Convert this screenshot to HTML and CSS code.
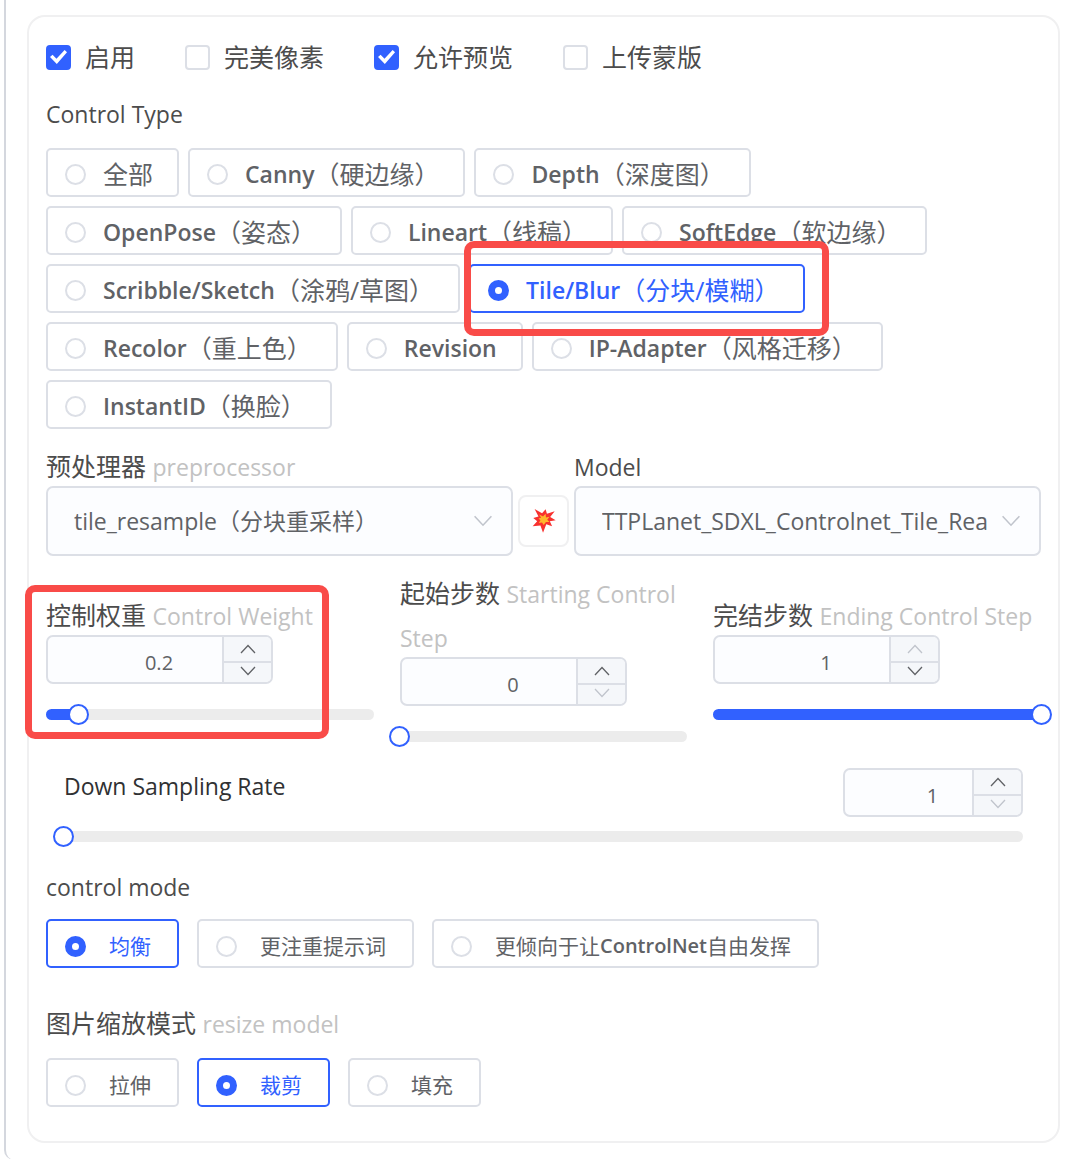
FILE: index.html
```html
<!DOCTYPE html>
<html lang="zh-CN">
<head>
<meta charset="utf-8">
<meta name="viewport" content="width=device-width, initial-scale=1">
<title>ControlNet</title>
<link rel="stylesheet" href="styles.css">
</head>
<body>
<svg class="sprite" aria-hidden="true">
  <symbol id="up" viewBox="0 0 16 10"><path d="M1 9 8 1.5 15 9" fill="none" stroke="currentColor" stroke-width="1.3"/></symbol>
  <symbol id="down" viewBox="0 0 16 10"><path d="M1 1 8 8.5 15 1" fill="none" stroke="currentColor" stroke-width="1.3"/></symbol>
</svg>
<main class="page">
<form class="card">
  <div class="checks">
    <label class="check"><input type="checkbox" checked>启用</label>
    <label class="check"><input type="checkbox">完美像素</label>
    <label class="check"><input type="checkbox" checked>允许预览</label>
    <label class="check"><input type="checkbox">上传蒙版</label>
  </div>

  <fieldset class="group group-type">
    <legend class="title"><span class="latin">Control Type</span></legend>
    <div class="options">
      <label class="option"><input type="radio" name="type">全部</label>
      <label class="option"><input type="radio" name="type"><b>Canny</b>（硬边缘）</label>
      <label class="option"><input type="radio" name="type"><b>Depth</b>（深度图）</label>
      <label class="option"><input type="radio" name="type"><b>OpenPose</b>（姿态）</label>
      <label class="option"><input type="radio" name="type"><b>Lineart</b>（线稿）</label>
      <label class="option"><input type="radio" name="type"><b>SoftEdge</b>（软边缘）</label>
      <label class="option"><input type="radio" name="type"><b>Scribble/Sketch</b>（涂鸦/草图）</label>
      <label class="option marked"><input type="radio" name="type" checked><b>Tile/Blur</b>（分块/模糊）</label>
      <label class="option"><input type="radio" name="type"><b>Recolor</b>（重上色）</label>
      <label class="option"><input type="radio" name="type"><b>Revision</b></label>
      <label class="option"><input type="radio" name="type"><b>IP-Adapter</b>（风格迁移）</label>
      <label class="option"><input type="radio" name="type"><b>InstantID</b>（换脸）</label>
    </div>
  </fieldset>

  <div class="models">
    <div class="field">
      <label class="title" for="pre">预处理器 <span class="latin hint">preprocessor</span></label>
      <div class="select">
        <select id="pre"><option>tile_resample（分块重采样）</option></select>
        <svg class="chevron"><use href="#down"/></svg>
      </div>
    </div>
    <button class="run" type="button" aria-label="预处理">
      <svg viewBox="8 10 74 74">
        <path fill="#f8312f" d="M16 10 39 23 50 11 54 25 78 17 64 35 81 45 63 48 70 63 52 57 42 83 34 61 10 63 24 48 12 38 28 33z"/>
        <path fill="#ffb62e" d="M30 27 42 33 50 25 51 36 62 34 55 43 62 50 51 50 44 59 39 52 29 53 34 45 28 39 36 37z"/>
      </svg>
    </button>
    <div class="field">
      <label class="title" for="model"><span class="latin">Model</span></label>
      <div class="select">
        <select id="model"><option>TTPLanet_SDXL_Controlnet_Tile_Rea</option></select>
        <svg class="chevron"><use href="#down"/></svg>
      </div>
    </div>
  </div>

  <div class="steps">
    <div class="step marked">
      <label class="title" for="weight">控制权重 <span class="latin hint">Control Weight</span></label>
      <div class="number">
        <input id="weight" type="number" value="0.2" min="0" max="2" step="0.1">
        <div class="spin">
          <button type="button" aria-label="增加"><svg><use href="#up"/></svg></button>
          <button type="button" aria-label="减少"><svg><use href="#down"/></svg></button>
        </div>
      </div>
      <div class="slider" style="--value: 10%"><input type="range" aria-label="Control Weight" min="0" max="2" step="0.1" value="0.2"></div>
    </div>
    <div class="step">
      <label class="title" for="start">起始步数 <span class="latin hint">Starting Control Step</span></label>
      <div class="number">
        <input id="start" type="number" value="0" min="0" max="1">
        <div class="spin">
          <button type="button" aria-label="增加"><svg><use href="#up"/></svg></button>
          <button type="button" aria-label="减少" disabled><svg><use href="#down"/></svg></button>
        </div>
      </div>
      <div class="slider" style="--value: 0%"><input type="range" aria-label="Starting Control Step" min="0" max="1" step="0.01" value="0"></div>
    </div>
    <div class="step">
      <label class="title" for="end">完结步数 <span class="latin hint">Ending Control Step</span></label>
      <div class="number">
        <input id="end" type="number" value="1" min="0" max="1">
        <div class="spin">
          <button type="button" aria-label="增加" disabled><svg><use href="#up"/></svg></button>
          <button type="button" aria-label="减少"><svg><use href="#down"/></svg></button>
        </div>
      </div>
      <div class="slider" style="--value: 100%"><input type="range" aria-label="Ending Control Step" min="0" max="1" step="0.01" value="1"></div>
    </div>
  </div>

  <div class="sampling">
    <div class="sampling-head">
      <label for="rate"><span class="latin">Down Sampling Rate</span></label>
      <div class="number narrow">
        <input id="rate" type="number" value="1" min="1" max="4">
        <div class="spin">
          <button type="button" aria-label="增加"><svg><use href="#up"/></svg></button>
          <button type="button" aria-label="减少" disabled><svg><use href="#down"/></svg></button>
        </div>
      </div>
    </div>
    <div class="slider" style="--value: 0%"><input type="range" aria-label="Down Sampling Rate" min="1" max="4" step="0.1" value="1"></div>
  </div>

  <fieldset class="group group-mode">
    <legend class="title"><span class="latin">control mode</span></legend>
    <div class="options small">
      <label class="option"><input type="radio" name="mode" checked>均衡</label>
      <label class="option"><input type="radio" name="mode">更注重提示词</label>
      <label class="option"><input type="radio" name="mode">更倾向于让<b>ControlNet</b>自由发挥</label>
    </div>
  </fieldset>

  <fieldset class="group group-resize">
    <legend class="title">图片缩放模式 <span class="latin hint">resize model</span></legend>
    <div class="options small">
      <label class="option"><input type="radio" name="resize">拉伸</label>
      <label class="option"><input type="radio" name="resize" checked>裁剪</label>
      <label class="option"><input type="radio" name="resize">填充</label>
    </div>
  </fieldset>
</form>
</main>
</body>
</html>
```
FILE: styles.css
```css
:root {
  --blue: #3161ff;
  --line: #dcdfe6;
  --text: #606266;
  --fill: #fcfdff;
  --red: #f94b48;
}

* { box-sizing: border-box; }

body {
  margin: 0;
  background: #fff;
  color: #4c4c4c;
  font-family: "Open Sans", "Noto Sans CJK SC", sans-serif;
  font-size: 25px;
  line-height: 44px;
}

input, select, button { font: inherit; color: inherit; }

.sprite { display: none; }

.page {
  min-height: 100vh;
  margin-left: 4px;
  padding: 15px 20px 17px 21px;
  border-left: 2px solid #d4d7de;
  border-bottom-left-radius: 10px;
}

.card {
  padding: 18px 17px 34px;
  border: 2px solid #f0f0f1;
  border-radius: 18px;
}

.latin {
  font-size: 23px;
  line-height: 1;
}

.hint { color: #c2c2c2; }

.title {
  display: block;
  padding: 0;
}

.checks {
  display: flex;
  flex-wrap: wrap;
  gap: 0 50px;
}

.check {
  display: flex;
  align-items: center;
  gap: 14px;
}

.check input {
  appearance: none;
  width: 25px;
  height: 25px;
  margin: 0;
  border: 2px solid var(--line);
  border-radius: 4px;
  background: #fff;
  display: grid;
  place-items: center;
}

.check input:checked {
  border-color: var(--blue);
  background: var(--blue);
}

.check input:checked::before {
  content: "";
  width: 17px;
  height: 14px;
  background: #fff;
  clip-path: polygon(0 50%, 15% 34%, 38% 62%, 86% 0, 100% 16%, 40% 100%);
}

.group {
  margin: 0;
  padding: 0;
  border: 0;
  min-width: 0;
}

.group-type { margin-top: 12px; }
.group-mode { margin-top: 22px; }
.group-resize { margin-top: 33px; }

.options {
  display: flex;
  flex-wrap: wrap;
  gap: 9px;
  margin-top: 13px;
}

.group-mode .options { margin-top: 11px; }

.option {
  position: relative;
  display: flex;
  align-items: center;
  height: 49px;
  padding: 2px 24px 0 17px;
  border: 2px solid var(--line);
  border-radius: 5px;
  color: var(--text);
  white-space: nowrap;
}

.option b {
  font-size: 23px;
  font-weight: 600;
}

.option input {
  appearance: none;
  width: 21px;
  height: 21px;
  margin: 2px 17px 0 0;
  border: 2px solid var(--line);
  border-radius: 50%;
  background: #fff;
}

.option:has(:checked) {
  border-color: var(--blue);
  color: var(--blue);
}

.option input:checked {
  border: 7px solid var(--blue);
}

.options.small {
  gap: 18px;
  font-size: 21px;
}

.small .option { padding: 4px 26px 0 17px; }
.small .option b { font-size: 20px; }
.small .option input { margin-right: 23px; }

.marked { position: relative; }

.marked::after {
  content: "";
  position: absolute;
  z-index: 1;
  border: 7px solid var(--red);
  border-radius: 10px;
  pointer-events: none;
}

.option.marked::after { inset: -25px -26px; left: -7px; }
.step.marked::after { inset: -8px 45px -19px -21px; }

.models {
  display: grid;
  grid-template-columns: 1fr 51px 1fr;
  gap: 5px;
  align-items: end;
  margin-top: 15px;
}

.field { min-width: 0; }

.select {
  display: grid;
  align-items: center;
  margin-top: -2px;
}

.select > * { grid-area: 1 / 1; }

select {
  appearance: none;
  width: 100%;
  height: 70px;
  padding: 0 52px 0 26px;
  border: 2px solid var(--line);
  border-radius: 7px;
  background: var(--fill);
  color: var(--text);
  font-size: 23px;
}

.chevron {
  justify-self: end;
  width: 20px;
  height: 12px;
  margin-right: 20px;
  color: #c0c4cc;
  pointer-events: none;
}

.run {
  display: grid;
  place-items: center;
  height: 52px;
  margin-bottom: 9px;
  padding: 0;
  border: 2px solid #f0f0f1;
  border-radius: 8px;
  background: #fff;
}

.run svg { width: 24px; height: 24px; }

.steps {
  display: grid;
  grid-template-columns: 8fr 7fr 8fr;
  gap: 26px;
  align-items: center;
  margin-top: 15px;
}

.number {
  display: flex;
  width: 227px;
  height: 49px;
  margin-top: -2px;
  border: 2px solid var(--line);
  border-radius: 7px;
  background: var(--fill);
  overflow: hidden;
}

.number.narrow {
  width: 180px;
  margin-top: 0;
}

.number input {
  appearance: textfield;
  flex: 1;
  min-width: 0;
  padding: 6px 0 0 48px;
  border: 0;
  background: none;
  color: var(--text);
  font-size: 20px;
  text-align: center;
}

.number input::-webkit-inner-spin-button { display: none; }

.spin {
  display: grid;
  grid-template-rows: 24px 1fr;
  width: 49px;
  border-left: 2px solid var(--line);
  background: #f5f7fa;
}

.spin button {
  display: grid;
  place-items: center;
  padding: 0;
  border: 0;
  background: none;
  color: var(--text);
}

.spin button + button {
  padding-bottom: 3px;
  border-top: 2px solid var(--line);
}

.spin button:disabled { color: #c0c4cc; }
.spin svg { width: 16px; height: 10px; }

.slider {
  display: flex;
  height: 11px;
  margin-top: 25px;
  border-radius: 6px;
  background: linear-gradient(var(--blue), var(--blue)) 0 / var(--value) 100% no-repeat #ececec;
}

.slider input {
  appearance: none;
  flex: 1;
  min-width: 0;
  height: 21px;
  margin: -5px -11px;
  background: none;
}

.slider input::-webkit-slider-thumb {
  appearance: none;
  width: 21px;
  height: 21px;
  border: 2px solid var(--blue);
  border-radius: 50%;
  background: #fff;
}

.sampling {
  margin-top: 26px;
  padding: 0 18px;
  color: #303133;
}

.sampling-head {
  display: flex;
  justify-content: space-between;
  line-height: 34px;
}

.sampling .slider { margin-top: 14px; }
```
